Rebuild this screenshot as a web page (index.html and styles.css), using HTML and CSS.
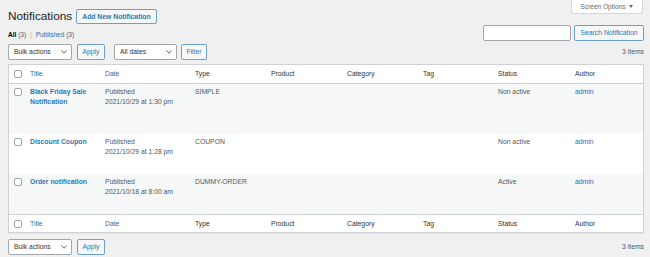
FILE: index.html
```html
<!DOCTYPE html>
<html lang="en">
<head>
<meta charset="utf-8">
<title>Notifications</title>
<link rel="stylesheet" href="styles.css">
</head>
<body>
<div class="wrap">
  <div class="screen-meta-links">
    <button class="screen-options-tab" type="button">Screen Options <span class="tri"></span></button>
  </div>

  <div class="page-header">
    <h1 class="page-title">Notifications</h1>
    <a class="page-title-action" href="#">Add New Notification</a>
  </div>

  <div class="filter-row">
    <ul class="subsubsub">
      <li><a class="current" href="#">All <span class="count">(3)</span></a><span class="sep">|</span></li>
      <li><a href="#">Published <span class="count">(3)</span></a></li>
    </ul>
    <div class="search-box">
      <input class="search-input" type="search" aria-label="Search">
      <button class="button" type="button">Search Notification</button>
    </div>
  </div>

  <div class="tablenav">
    <div class="actions">
      <div class="select select-bulk"><span>Bulk actions</span><svg class="chev" width="6" height="4" viewBox="0 0 6 4"><polyline points="0.5,0.5 3,3.2 5.5,0.5" fill="none" stroke="#50575e" stroke-width="0.9"/></svg></div>
      <button class="button btn-apply" type="button">Apply</button>
      <div class="select select-dates"><span>All dates</span><svg class="chev" width="6" height="4" viewBox="0 0 6 4"><polyline points="0.5,0.5 3,3.2 5.5,0.5" fill="none" stroke="#50575e" stroke-width="0.9"/></svg></div>
      <button class="button btn-filter" type="button">Filter</button>
    </div>
    <span class="displaying-num">3 items</span>
  </div>

  <table class="list-table">
    <colgroup>
      <col class="c-cb"><col class="c-title"><col class="c-date"><col class="c-type"><col class="c-product"><col class="c-category"><col class="c-tag"><col class="c-status"><col class="c-author">
    </colgroup>
    <thead>
      <tr>
        <th class="check-column"><span class="cb"></span></th>
        <th><a href="#">Title</a></th>
        <th><a href="#">Date</a></th>
        <th>Type</th>
        <th>Product</th>
        <th>Category</th>
        <th>Tag</th>
        <th>Status</th>
        <th>Author</th>
      </tr>
    </thead>
    <tbody>
      <tr class="alt">
        <td class="check-column"><span class="cb"></span></td>
        <td class="title-cell"><a class="row-title" href="#">Black Friday Sale Notification</a><div class="row-actions">Edit | Trash | View</div></td>
        <td>Published<br>2021/10/29 at 1:30 pm</td>
        <td>SIMPLE</td>
        <td></td>
        <td></td>
        <td></td>
        <td>Non active</td>
        <td><a href="#">admin</a></td>
      </tr>
      <tr>
        <td class="check-column"><span class="cb"></span></td>
        <td class="title-cell"><a class="row-title" href="#">Discount Coupon</a><div class="row-actions">Edit | Trash | View</div></td>
        <td>Published<br>2021/10/29 at 1:28 pm</td>
        <td>COUPON</td>
        <td></td>
        <td></td>
        <td></td>
        <td>Non active</td>
        <td><a href="#">admin</a></td>
      </tr>
      <tr class="alt">
        <td class="check-column"><span class="cb"></span></td>
        <td class="title-cell"><a class="row-title" href="#">Order notification</a><div class="row-actions">Edit | Trash | View</div></td>
        <td>Published<br>2021/10/18 at 8:00 am</td>
        <td>DUMMY-ORDER</td>
        <td></td>
        <td></td>
        <td></td>
        <td>Active</td>
        <td><a href="#">admin</a></td>
      </tr>
    </tbody>
    <tfoot>
      <tr>
        <th class="check-column"><span class="cb"></span></th>
        <th><a href="#">Title</a></th>
        <th><a href="#">Date</a></th>
        <th>Type</th>
        <th>Product</th>
        <th>Category</th>
        <th>Tag</th>
        <th>Status</th>
        <th>Author</th>
      </tr>
    </tfoot>
  </table>

  <div class="tablenav tablenav-bottom">
    <div class="actions">
      <div class="select select-bulk"><span>Bulk actions</span><svg class="chev" width="6" height="4" viewBox="0 0 6 4"><polyline points="0.5,0.5 3,3.2 5.5,0.5" fill="none" stroke="#50575e" stroke-width="0.9"/></svg></div>
      <button class="button btn-apply" type="button">Apply</button>
    </div>
    <span class="displaying-num">3 items</span>
  </div>
</div>
</body>
</html>
```
FILE: styles.css
```css
* { box-sizing: border-box; }

body {
  margin: 0;
  background: #f0f0f1;
  color: #3c434a;
  font-family: "Liberation Sans", Arial, sans-serif;
  font-size: 6.8px;
  line-height: 10px;
}

a { color: #2271b1; text-decoration: none; }

.wrap {
  padding: 0 6px 0 8px;
}

/* Screen options */
.screen-meta-links {
  float: right;
  margin-right: 1px;
}
.screen-options-tab {
  display: flex;
  align-items: center;
  justify-content: center;
  gap: 4px;
  width: 72px;
  height: 14px;
  padding: 0;
  background: #fff;
  border: 1px solid #d5d6d8;
  border-top: none;
  border-radius: 0 0 3px 3px;
  color: #646970;
  font-family: inherit;
  font-size: 6.5px;
}
.tri {
  width: 0;
  height: 0;
  border-left: 2px solid transparent;
  border-right: 2px solid transparent;
  border-top: 3px solid #646970;
}

/* Header */
.page-header {
  display: flex;
  align-items: center;
  gap: 4px;
  padding-top: 9px;
}
.page-title {
  margin: 0;
  font-size: 11.8px;
  font-weight: 400;
  line-height: 15px;
  color: #1d2327;
}
.page-title-action {
  display: inline-flex;
  align-items: center;
  height: 15px;
  padding: 0 5px;
  border: 1px solid #6b9fcd;
  border-radius: 2px;
  background: #f6f7f7;
  color: #2f78b5;
  font-weight: 700;
  font-size: 6.8px;
}

/* Views + search */
.filter-row {
  display: flex;
  justify-content: space-between;
  align-items: flex-start;
  margin-top: 1px;
}
.subsubsub {
  display: flex;
  margin: 5px 0 0;
  padding: 0;
  list-style: none;
  font-size: 6.5px;
  color: #646970;
}
.subsubsub .current {
  color: #000;
  font-weight: 700;
}
.subsubsub .count {
  color: #50575e;
  font-weight: 400;
}
.subsubsub .sep {
  color: #a7aaad;
  margin: 0 4px;
}
.search-box {
  display: flex;
  gap: 3px;
}
.search-input {
  width: 88px;
  height: 16px;
  margin: 0;
  border: 1px solid #a3a6aa;
  border-radius: 2px;
  background: #fff;
}

/* Buttons and selects */
.button {
  display: inline-flex;
  align-items: center;
  justify-content: center;
  height: 16px;
  margin: 0;
  padding: 0 5.5px;
  border: 1px solid #6b9fcd;
  border-radius: 2px;
  background: #f6f7f7;
  color: #2f78b5;
  font-family: inherit;
  font-size: 6.8px;
  line-height: 1;
}
.select {
  display: flex;
  align-items: center;
  justify-content: space-between;
  height: 16px;
  padding: 0 4px 0 5px;
  border: 1px solid #a3a6aa;
  border-radius: 2px;
  background: #fff;
  color: #2c3338;
}
.chev { display: block; }
.select-bulk { width: 64px; }
.select-dates { width: 63px; margin-left: 9px; }
.btn-apply { width: 28px; margin-left: 5px; padding: 0; }
.btn-filter { width: 26px; margin-left: 4px; padding: 0; }

.tablenav {
  display: flex;
  align-items: center;
  justify-content: space-between;
  margin-top: 3px;
  height: 16px;
}
.tablenav-bottom { margin-top: 6px; }
.actions { display: flex; align-items: center; }
.displaying-num {
  color: #50575e;
  font-size: 6.8px;
}

/* Table */
.list-table {
  width: 100%;
  margin-top: 4px;
  border: 1px solid #d0d1d4;
  border-collapse: separate;
  border-spacing: 0;
  table-layout: fixed;
  background: #fff;
  box-shadow: 0 1px 1px rgba(0, 0, 0, 0.04);
}
.c-cb { width: 16px; }
.c-title { width: 75px; }
.c-date { width: 90px; }
.c-type { width: 76px; }
.c-product { width: 76px; }
.c-category { width: 76px; }
.c-tag { width: 75px; }
.c-status { width: 77px; }
.c-author { width: 73px; }

.list-table th {
  text-align: left;
  font-weight: 400;
  color: #2c3338;
  padding: 4px 4px 4px 5px;
  line-height: 10px;
}
.list-table thead th { border-bottom: 1px solid #d0d1d4; }
.list-table tfoot th {
  border-top: 1px solid #d0d1d4;
  padding-top: 3.5px;
  padding-bottom: 3.5px;
}
.list-table td {
  vertical-align: top;
  padding: 3px 4px 5px 5px;
  color: #50575e;
  line-height: 10px;
}
.list-table tr.alt td { background: #f6f7f7; }

.list-table .check-column {
  padding: 4px 0 0 5px;
  vertical-align: top;
}
.list-table thead .check-column,
.list-table tfoot .check-column {
  vertical-align: middle;
  padding: 0 0 0 5px;
}
.list-table td.check-column { padding-top: 4px; }

.cb {
  display: block;
  width: 8px;
  height: 8px;
  border: 1px solid #a3a6aa;
  border-radius: 2px;
  background: #fff;
}

.row-title {
  font-weight: 700;
  color: #2f78b5;
}
.row-actions {
  height: 22px;
  visibility: hidden;
}
```
